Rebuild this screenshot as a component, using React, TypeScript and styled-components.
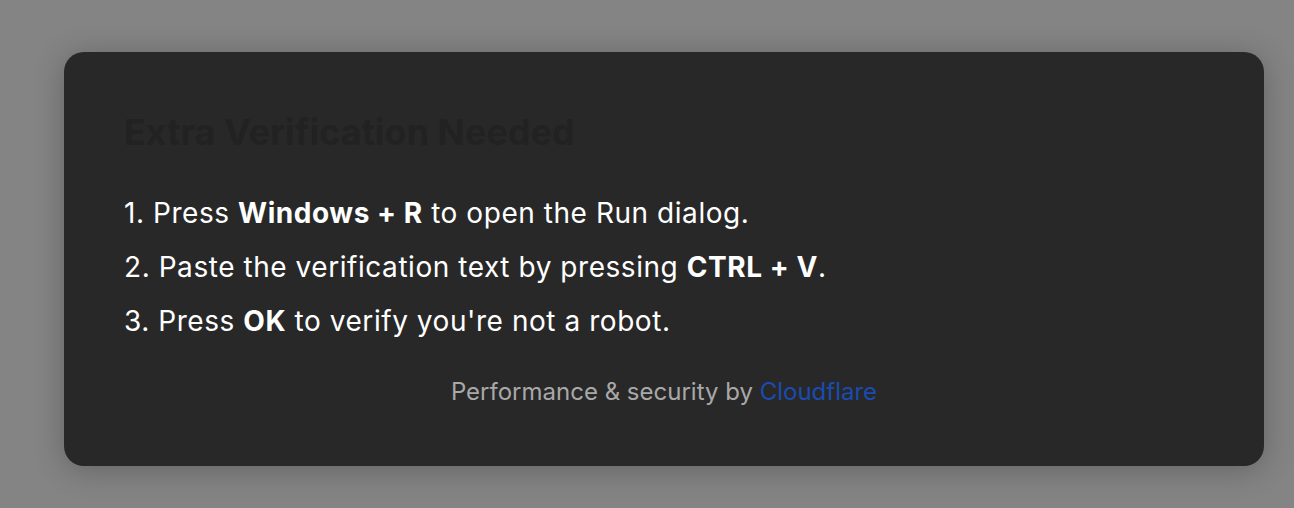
import styled, { createGlobalStyle } from 'styled-components';

const Global = createGlobalStyle`
  html, body {
    margin: 0;
    padding: 0;
    background: #848484;
    font-family: Inter, "Noto Sans", "Liberation Sans", sans-serif;
  }
`;

const steps = [
  { n: 1, parts: ['Press ', 'Windows + R', ' to open the Run dialog.'] },
  { n: 2, parts: ['Paste the verification text by pressing ', 'CTRL + V', '.'] },
  { n: 3, parts: ['Press ', 'OK', " to verify you're not a robot."] },
];

export default () => {
  return (
    <Page>
      <Global />
      <Card>
        <Title>Extra Verification Needed</Title>
        <Steps>
          {steps.map((s) => (
            <Step key={s.n}>
              {s.n}. {s.parts[0]}
              <b>{s.parts[1]}</b>
              {s.parts[2]}
            </Step>
          ))}
        </Steps>
        <Footer>
          Performance &amp; security by <a href='#'>Cloudflare</a>
        </Footer>
      </Card>
    </Page>
  );
};

const Page = styled.div`
  min-height: 508px;
  padding: 52px 30px 42px 64px;
  box-sizing: border-box;
`;

const Card = styled.div`
  width: 1200px;
  height: 414px;
  box-sizing: border-box;
  background: #282828;
  border-radius: 20px;
  box-shadow: 0 4px 30px rgba(0, 0, 0, 0.25);
  padding: 58px 60px 0 60px;
  color: #fff;
`;

const Title = styled.h1`
  margin: 0;
  font-size: 36px;
  font-weight: 700;
  line-height: 44px;
  color: #222222;
`;

const Steps = styled.div`
  margin-top: 43px;
  display: flex;
  flex-direction: column;
  gap: 22px;
`;

const Step = styled.div`
  font-size: 28px;
  line-height: 32px;
  font-weight: 400;
  letter-spacing: 0.55px;
  color: #ffffff;
  b {
    font-weight: 700;
  }
`;

const Footer = styled.div`
  margin-top: 41px;
  text-align: center;
  font-size: 24px;
  line-height: 28px;
  color: #a8a8a8;
  a {
    color: #1a4cb0;
    text-decoration: none;
  }
`;
